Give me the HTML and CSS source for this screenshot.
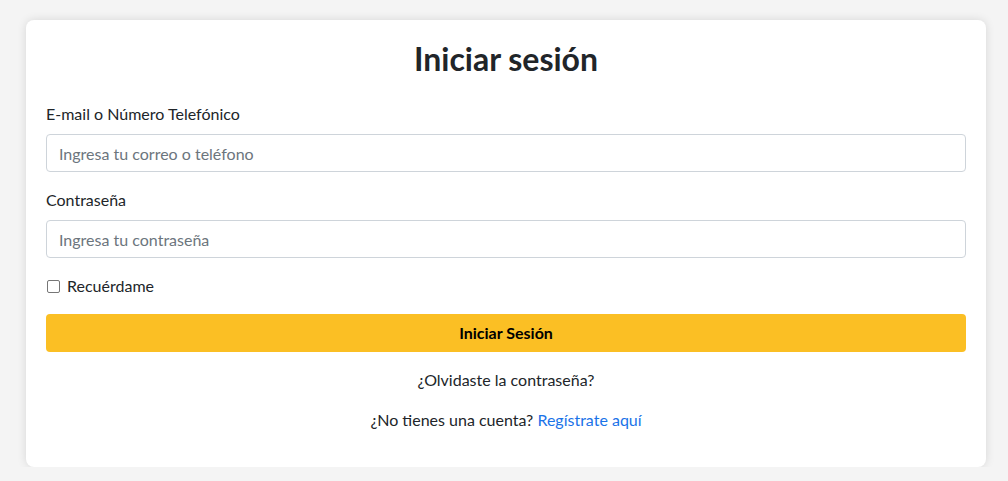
FILE: index.html
```html
<!DOCTYPE html>
<html lang="es">
<head>
<meta charset="utf-8">
<title>Iniciar sesión</title>
<link rel="stylesheet" href="styles.css">
</head>
<body>
<div class="page">
  <div class="card">
    <h2 class="title">Iniciar sesión</h2>
    <form class="form">
      <div class="field">
        <label class="label" for="user">E-mail o Número Telefónico</label>
        <input class="input" id="user" type="text" placeholder="Ingresa tu correo o teléfono">
      </div>
      <div class="field">
        <label class="label" for="pass">Contraseña</label>
        <input class="input" id="pass" type="password" placeholder="Ingresa tu contraseña">
      </div>
      <div class="check-row">
        <span class="checkbox"></span>
        <span class="check-label">Recuérdame</span>
      </div>
      <button class="btn" type="button">Iniciar Sesión</button>
    </form>
    <p class="text">¿Olvidaste la contraseña?</p>
    <p class="text">¿No tienes una cuenta? <a class="link" href="#">Regístrate aquí</a></p>
  </div>
</div>
</body>
</html>
```
FILE: styles.css
```css
* { box-sizing: border-box; }
html, body { margin: 0; padding: 0; }
body {
  background: #f4f4f4;
  font-family: Lato, "Noto Sans", sans-serif;
  font-size: 16px;
  line-height: 1.5;
  color: #212529;
}
.page {
  padding: 20px 22px 0 26px;
}
.card {
  background: #fff;
  border-radius: 8px;
  box-shadow: 0 0 10px rgba(0,0,0,0.12);
  padding: 20px 20px 19px;
}
.title {
  margin: 0 0 24px;
  text-align: center;
  font-size: 32px;
  line-height: 1.2;
  font-weight: 700;
}
.form { display: flex; flex-direction: column; }
.field { margin-bottom: 16px; display: flex; flex-direction: column; }
.label { margin-bottom: 8px; }
.input {
  height: 38px;
  padding: 6px 12px;
  border: 1px solid #ced4da;
  border-radius: 4px;
  font: inherit;
  color: #212529;
  background: #fff;
}
.input::placeholder { color: #6c757d; }
.check-row {
  display: flex;
  align-items: center;
  height: 24px;
  margin-bottom: 16px;
}
.checkbox {
  width: 13px;
  height: 13px;
  margin-left: 1px;
  border: 1px solid #767676;
  border-radius: 2px;
  margin-right: 7px;
}
.btn {
  height: 38px;
  border: none;
  border-radius: 4px;
  background: #fbbf24;
  color: #000;
  font: inherit;
  font-weight: 700;
}
.text {
  margin: 16px 0;
  text-align: center;
}
.link { color: #1a73e8; text-decoration: none; }
```
